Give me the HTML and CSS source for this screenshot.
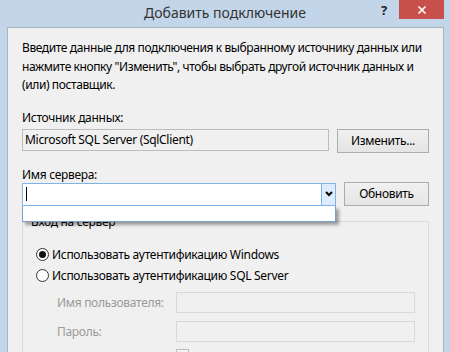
FILE: index.html
```html
<!DOCTYPE html>
<html lang="ru">
<head>
<meta charset="utf-8">
<title>Добавить подключение</title>
<link rel="stylesheet" href="styles.css">
</head>
<body>
<div class="window">
  <div class="titlebar">
    <div class="tb-side"></div>
    <div class="title">Добавить подключение</div>
    <div class="tb-side tb-controls">
      <span class="help">?</span>
      <span class="close"><svg width="10" height="10" viewBox="0 0 10 10"><path d="M1.5 1.5 L8.5 8.5 M8.5 1.5 L1.5 8.5" stroke="#fff" stroke-width="1.6" fill="none"/></svg></span>
    </div>
  </div>
  <div class="client">
    <p class="intro">Введите данные для подключения к выбранному источнику данных или<br>нажмите кнопку "Изменить", чтобы выбрать другой источник данных и<br>(или) поставщик.</p>

    <div class="label">Источник данных:</div>
    <div class="row">
      <div class="textbox readonly">Microsoft SQL Server (SqlClient)</div>
      <div class="button btn-change">Изменить...</div>
    </div>

    <div class="label label-server">Имя сервера:</div>
    <div class="row row-server">
      <div class="combo-wrap">
        <div class="combo">
          <span class="caret"></span>
          <span class="combo-arrow"><svg width="8" height="6" viewBox="0 0 8 6"><path d="M1 1 L4 4 L7 1" stroke="#000" stroke-width="2" fill="none"/></svg></span>
        </div>
        <div class="dropdown"></div>
      </div>
      <div class="button btn-refresh">Обновить</div>
    </div>

    <fieldset class="group">
      <legend>Вход на сервер</legend>
      <div class="radio-row">
        <span class="radio checked"></span>
        <span>Использовать аутентификацию Windows</span>
      </div>
      <div class="radio-row radio-row2">
        <span class="radio"></span>
        <span>Использовать аутентификацию SQL Server</span>
      </div>
      <div class="field-row">
        <span class="field-label">Имя пользователя:</span>
        <div class="textbox disabled"></div>
      </div>
      <div class="field-row field-row2">
        <span class="field-label">Пароль:</span>
        <div class="textbox disabled"></div>
      </div>
      <div class="check-row">
        <span class="checkbox"></span>
      </div>
    </fieldset>
  </div>
</div>
</body>
</html>
```
FILE: styles.css
```css
html, body {
  margin: 0;
  padding: 0;
}
body {
  width: 450px;
  height: 352px;
  overflow: hidden;
  background: #c3d6e9;
  font-family: "Noto Sans", "Open Sans", "DejaVu Sans", sans-serif;
  font-size: 12px;
  letter-spacing: -0.3px;
  color: #000;
}
.window {
  display: flex;
  flex-direction: column;
}
.titlebar {
  height: 27px;
  display: grid;
  grid-template-columns: 1fr auto 1fr;
  align-items: start;
}
.title {
  font-size: 14px;
  letter-spacing: 0;
  color: #333;
  padding-top: 3px;
  line-height: 20px;
}
.tb-controls {
  display: flex;
  justify-content: flex-end;
  align-items: flex-start;
  padding-right: 6px;
}
.help {
  font-weight: bold;
  font-size: 13px;
  color: #222;
  line-height: 14px;
  margin-top: 3px;
  margin-right: 12px;
}
.close {
  width: 45px;
  height: 19px;
  background: #c7504c;
  display: flex;
  align-items: center;
  justify-content: center;
}
.client {
  margin: 0 6px 0 7px;
  border: 1px solid #aab4be;
  border-bottom: none;
  background: #f0f0f0;
  padding: 11px 14px 0 14px;
  height: 400px;
}
.intro {
  margin: 0;
  line-height: 18.5px;
  letter-spacing: -0.4px;
  white-space: nowrap;
}
.label {
  margin-top: 15px;
  line-height: 16px;
  height: 16px;
}
.label-server {
  margin-top: 14px;
}
.row {
  display: flex;
  align-items: flex-start;
  gap: 8px;
  margin-top: 3px;
}
.row-server {
  margin-top: 0;
  gap: 8px;
}
.textbox {
  box-sizing: border-box;
  border: 1px solid #c5c5c5;
  height: 22px;
  line-height: 20px;
  padding: 0 2px;
}
.readonly {
  width: 307px;
  background: #f0f0f0;
  border-color: #bdbdbd;
}
.button {
  box-sizing: border-box;
  border: 1px solid #acacac;
  background: linear-gradient(#f0f0f0, #e5e5e5);
  text-align: center;
}
.btn-change {
  width: 92px;
  height: 24px;
  line-height: 22px;
}
.btn-refresh {
  width: 85px;
  height: 24px;
  line-height: 22px;
  margin-top: -1px;
}
.combo-wrap {
  position: relative;
  width: 314px;
  height: 23px;
}
.combo {
  box-sizing: border-box;
  width: 314px;
  height: 23px;
  border: 1px solid #7eb4ea;
  border-right: none;
  background: #fff;
  display: flex;
  align-items: stretch;
}
.caret {
  width: 1px;
  background: #000;
  margin: 3px 0 4px 3px;
}
.combo-arrow {
  margin-left: auto;
  width: 15px;
  box-sizing: border-box;
  background: #dcecfc;
  border: 1px solid #7eb4ea;
  margin-top: -1px;
  margin-bottom: -1px;
  display: flex;
  align-items: center;
  justify-content: center;
}
.dropdown {
  position: absolute;
  left: 0;
  top: 23px;
  width: 314px;
  height: 16px;
  box-sizing: border-box;
  background: #fff;
  border: 1px solid #7a9dc9;
  border-top: none;
  box-shadow: 3px 3px 3px rgba(0, 0, 0, 0.35);
  z-index: 2;
}
.group {
  margin: 8px 0 0 0;
  border: 1px solid #dcdcdc;
  padding: 16px 13px 0 13px;
  min-width: 0;
}
.group legend {
  padding: 0 2px;
  margin-left: -7px;
  line-height: 16px;
}
.radio-row {
  display: flex;
  align-items: center;
  gap: 3px;
  height: 18px;
}
.radio-row2 {
  margin-top: 3px;
}
.radio {
  box-sizing: border-box;
  width: 13px;
  height: 13px;
  border: 1px solid #333;
  border-radius: 50%;
  background: #fff;
  display: flex;
  align-items: center;
  justify-content: center;
}
.radio.checked::after {
  content: "";
  width: 7px;
  height: 7px;
  border-radius: 50%;
  background: #111;
}
.field-row {
  display: flex;
  align-items: center;
  margin-top: 7px;
}
.field-row2 {
  margin-top: 8px;
}
.field-label {
  width: 119px;
  padding-left: 21px;
  color: #9a9a9a;
}
.disabled {
  width: 240px;
  height: 21px;
  background: #f0f0f0;
  border-color: #d9d9d9;
}
.check-row {
  padding-left: 140px;
  margin-top: 7px;
}
.checkbox {
  display: block;
  width: 13px;
  height: 13px;
  box-sizing: border-box;
  border: 1px solid #bcbcbc;
  background: #f4f4f4;
}
```
